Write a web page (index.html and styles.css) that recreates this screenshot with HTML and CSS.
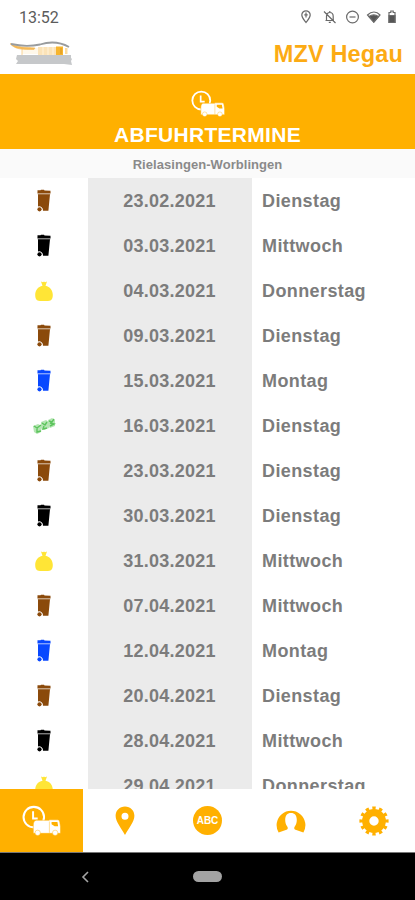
FILE: index.html
```html
<!DOCTYPE html>
<html lang="de">
    <head>
        <meta charset="utf-8">
        <meta name="viewport" content="width=device-width, initial-scale=1">
        <title>MZV Hegau</title>
        <link rel="stylesheet" href="styles.css">
    </head>
    <body>
        <svg class="sprite">
            <symbol id="bin" viewBox="0 0 16 24">
                <path fill="currentColor" d="M1.500 1.300h3l.5-.5h3l.5.7 6 .3v2.500h-13z"/>
                <path fill="currentColor" opacity=".35" d="M1.500 3.500h13v2h-13z"/>
                <path fill="currentColor" d="M2 5.300h12L12.400 21.700H7a4 4 0 0 0-5-4.300z"/>
                <circle fill="currentColor" cx="3.500" cy="20.300" r="2.100"/>
            </symbol>
            <symbol id="bag" viewBox="0 0 18 21">
                <path fill="currentColor" d="M6 .5l2 .8 1-.8 1 .8 2-.8-1.500 4.200c4.500 1 7.300 4.300 7.300 9.300 0 3-.8 4.700-2.400 5.400-1.500.7-11.300.7-12.800 0C1 18.700.2 17 .2 14c0-5 2.800-8.300 7.300-9.300z"/>
            </symbol>
            <symbol id="green" viewBox="0 0 24 18">
                <g fill="#b5e5b3">
                    <path d="M1 9l5-2 4 2-1 6-4 2-3-2zM9 5l5-2 3 2v6l-5 2-3-2zM16 3l4-2 3 2v6l-5 2-2-2z"/>
                </g>
                <g fill="none" stroke="#5cc45c" stroke-width="1.400">
                    <path d="M2 9l3 2 4-3M5 11v4l4-1M10 6l3 2 2-3M12 9l-1 3 4-1M17 4l3 1 2-3M18 6l4 1-4 2"/>
                </g>
            </symbol>
            <symbol id="truck" viewBox="0 0 38 30">
                <circle cx="11.500" cy="11.700" r="10" fill="none" stroke="currentColor" stroke-width="2"/>
                <path d="M10.800 6v7h4.500" fill="none" stroke="currentColor" stroke-width="1.900"/>
                <path d="M14 14.800h12.500v-.5h8.300c1.300 0 1.800 1 2 2.200l.7 4.500V27.500H11v-8c0-2.500 1-4.700 3-4.700z" fill="currentColor" stroke="#ffb000" stroke-width=".5"/>
                <path d="M28.800 16.500h5.700l.7 4h-3.400l-3-1.800z" fill="#ffb000"/>
                <path d="M26.700 16v11" stroke="#ffb000" stroke-width=".4"/>
                <circle cx="15.300" cy="27" r="2.600" fill="currentColor" stroke="#ffb000" stroke-width=".4"/>
                <circle cx="32.300" cy="27" r="2.600" fill="currentColor" stroke="#ffb000" stroke-width=".4"/>
            </symbol>
        </svg>

        <div class="status">
            <span class="clock">13:52</span>
            <svg class="status-icons" viewBox="0 0 100 16" fill="none" stroke="#6a6a6a" stroke-width="1.200">
                <path d="M6 13.500C4 10.800 1.800 8.800 1.800 6a4.200 4.200 0 0 1 8.400 0C10.200 8.800 8 10.800 6 13.500z"/>
                <path d="M6 3.500v5M4.300 5.800h3.400"/>
                <path d="M25.500 11.500h8.500M26.500 11V7.500c0-2.500 1.300-4 3.300-4s3.400 1.500 3.400 4V11M29.800 2v1.500M28.800 13.300h2M24 2.500l11.500 11.500"/>
                <circle cx="52.500" cy="8" r="5.900"/>
                <path d="M49.500 8h6"/>
                <path d="M67.500 6c4-4 9-4 12.500 0L73.800 13z"/>
                <path d="M69 7.500c3-2 6.500-2 9.500 0L73.800 13z" fill="#555"/>
                <path d="M89 3.500h1.800V2h2.400v1.500H95v10h-6z"/>
                <path d="M89 6.500h6v7h-6z" fill="#555"/>
            </svg>
        </div>

        <header class="header">
            <svg class="logo" viewBox="0 0 64 26">
                <path d="M7 14h54v3l1 1-1 2 1 4-8-1H6l2-3-2-2z" fill="#c6c8ca"/>
                <path d="M12 7h18v6H12z" fill="#fff8ea"/>
                <path d="M28 6h20v8H28z" fill="#fbe3b8"/>
                <path d="M33 6v8M38 6v8M43 6v8" stroke="#fff3dc"/>
                <path d="M46 5.500h7V14h-7z" fill="#f7b52d"/>
                <path d="M55 7h2.500v6H55z" fill="#fbdca0"/>
                <path d="M51 7v6" stroke="#d89420"/>
                <path d="M0 2.500c7 4 16 3.500 25 4.500l-1 1.500C14 8.500 5 9 0 2.500zM12 8v6" fill="#f5b856" stroke="#f5b856" stroke-width=".6"/>
                <path d="M1 3c9 2 19 2.500 29 .500 11-3.500 21-2 29 2.500" fill="none" stroke="#999c9e" stroke-width="1.800"/>
            </svg>
            <h1>MZV Hegau</h1>
        </header>

        <div class="banner">
            <svg class="banner-icon"><use href="#truck"/></svg>
            <h2>ABFUHRTERMINE</h2>
        </div>
        <div class="place">Rielasingen-Worblingen</div>

        <main class="list">
            <div class="row">
                <div class="type"><svg class="bin brown"><use href="#bin"/></svg></div>
                <div class="date">23.02.2021</div>
                <div class="day">Dienstag</div>
            </div>
            <div class="row">
                <div class="type"><svg class="bin black"><use href="#bin"/></svg></div>
                <div class="date">03.03.2021</div>
                <div class="day">Mittwoch</div>
            </div>
            <div class="row">
                <div class="type"><svg class="bag"><use href="#bag"/></svg></div>
                <div class="date">04.03.2021</div>
                <div class="day">Donnerstag</div>
            </div>
            <div class="row">
                <div class="type"><svg class="bin brown"><use href="#bin"/></svg></div>
                <div class="date">09.03.2021</div>
                <div class="day">Dienstag</div>
            </div>
            <div class="row">
                <div class="type"><svg class="bin blue"><use href="#bin"/></svg></div>
                <div class="date">15.03.2021</div>
                <div class="day">Montag</div>
            </div>
            <div class="row">
                <div class="type"><svg class="green"><use href="#green"/></svg></div>
                <div class="date">16.03.2021</div>
                <div class="day">Dienstag</div>
            </div>
            <div class="row">
                <div class="type"><svg class="bin brown"><use href="#bin"/></svg></div>
                <div class="date">23.03.2021</div>
                <div class="day">Dienstag</div>
            </div>
            <div class="row">
                <div class="type"><svg class="bin black"><use href="#bin"/></svg></div>
                <div class="date">30.03.2021</div>
                <div class="day">Dienstag</div>
            </div>
            <div class="row">
                <div class="type"><svg class="bag"><use href="#bag"/></svg></div>
                <div class="date">31.03.2021</div>
                <div class="day">Mittwoch</div>
            </div>
            <div class="row">
                <div class="type"><svg class="bin brown"><use href="#bin"/></svg></div>
                <div class="date">07.04.2021</div>
                <div class="day">Mittwoch</div>
            </div>
            <div class="row">
                <div class="type"><svg class="bin blue"><use href="#bin"/></svg></div>
                <div class="date">12.04.2021</div>
                <div class="day">Montag</div>
            </div>
            <div class="row">
                <div class="type"><svg class="bin brown"><use href="#bin"/></svg></div>
                <div class="date">20.04.2021</div>
                <div class="day">Dienstag</div>
            </div>
            <div class="row">
                <div class="type"><svg class="bin black"><use href="#bin"/></svg></div>
                <div class="date">28.04.2021</div>
                <div class="day">Mittwoch</div>
            </div>
            <div class="row">
                <div class="type"><svg class="bag"><use href="#bag"/></svg></div>
                <div class="date">29.04.2021</div>
                <div class="day">Donnerstag</div>
            </div>
        </main>

        <nav class="tabs">
            <a class="tab active"><svg class="tab-truck"><use href="#truck"/></svg></a>
            <a class="tab">
                <svg class="tab-icon" viewBox="0 0 30 30">
                    <path fill="#ffb000" fill-rule="evenodd" d="M15 .5c5.300 0 9.400 4 9.400 9.300 0 6-5.400 11.700-9.400 19.200C11 21.500 5.600 15.800 5.600 9.800 5.600 4.500 9.700.5 15 .5zm0 6.300a3.500 3.500 0 1 0 0 7 3.500 3.500 0 0 0 0-7z"/>
                </svg>
            </a>
            <a class="tab"><span class="abc">ABC</span></a>
            <a class="tab">
                <svg class="tab-icon" viewBox="0 0 30 30">
                    <path fill="#ffb000" d="M2.600 26.500A14.400 14.400 0 1 1 27.400 26.500L19.500 23.800c-1.600-.6-1.600-2.300-.6-3.600 1.200-1.600 1.900-3.600 1.900-6.200 0-4.400-2-7-5.800-7s-5.800 2.600-5.800 7c0 2.600.7 4.600 1.900 6.200 1 1.300 1 3-.6 3.600z"/>
                </svg>
            </a>
            <a class="tab">
                <svg class="tab-icon" viewBox="0 0 30 30">
                    <circle cx="15" cy="15" r="8.300" fill="none" stroke="#ffb000" stroke-width="7.200"/>
                    <circle cx="15" cy="15" r="12.700" fill="none" stroke="#ffb000" stroke-width="3.800" pathLength="120" stroke-dasharray="5 5" stroke-dashoffset="2.500"/>
                </svg>
            </a>
        </nav>

        <div class="navbar">
            <svg class="back" viewBox="0 0 8 12"><path d="M7 1L2 6l5 5" fill="none" stroke="#a5a5a5" stroke-width="1.600"/></svg>
            <span class="home"></span>
            <span class="spacer"></span>
        </div>
    </body>
</html>
```
FILE: styles.css
```css
* {
    box-sizing: border-box;
}

body {
    margin: 0;
    height: 900px;
    display: flex;
    flex-direction: column;
    overflow: hidden;
    background-color: #ffffff;
    font-family: "Liberation Sans", Arial, sans-serif;
}

svg {
    display: block;
}

.sprite {
    position: absolute;
    width: 0;
    height: 0;
}

h1,
h2 {
    margin: 0;
    font-weight: 700;
}

.status {
    height: 34px;
    flex: none;
    display: flex;
    align-items: center;
    justify-content: space-between;
    padding: 0 15px 0 19px;
}

.clock {
    font-family: Roboto, sans-serif;
    font-size: 16px;
    color: #5c5c5c;
}

.status-icons {
    width: 100px;
    height: 16px;
}

.header {
    height: 40px;
    flex: none;
    display: flex;
    align-items: center;
    justify-content: space-between;
    padding: 0 12px 0 10px;
}

.logo {
    width: 64px;
    height: 26px;
}

.header h1 {
    font-size: 23.500px;
    letter-spacing: 0.15px;
    color: #fcab14;
}

.banner {
    height: 75px;
    flex: none;
    display: flex;
    flex-direction: column;
    align-items: center;
    padding-top: 16px;
    background-color: #ffb000;
    color: #ffffff;
}

.banner-icon {
    width: 34px;
    height: 27px;
}

.banner h2 {
    margin-top: 6px;
    font-size: 21px;
    line-height: 24px;
    letter-spacing: 0.3px;
}

.place {
    height: 29px;
    flex: none;
    background-color: #fafafa;
    color: #8a8a8a;
    font-size: 13px;
    font-weight: 700;
    line-height: 31px;
    letter-spacing: 0.05px;
    text-align: center;
}

.list {
    flex: 1;
    min-height: 0;
    overflow: hidden;
}

.row {
    height: 45px;
    display: grid;
    grid-template-columns: 88px 164px 1fr;
    color: #7c7c7c;
    font-size: 18px;
    font-weight: 700;
    line-height: 47px;
    letter-spacing: 0.4px;
}

.type {
    display: flex;
    align-items: center;
    justify-content: center;
    padding-bottom: 1px;
}

.date {
    padding-right: 1px;
    background-color: #ebebeb;
    letter-spacing: 0.25px;
    text-align: center;
}

.day {
    padding-left: 10px;
}

.bin {
    width: 16px;
    height: 24px;
}

.brown {
    color: #8b4a0b;
}

.black {
    color: #000000;
}

.blue {
    color: #0848ff;
}

.bag {
    width: 18px;
    height: 21px;
    color: #ffe536;
}

.green {
    width: 24px;
    height: 18px;
}

.tabs {
    height: 63px;
    flex: none;
    display: grid;
    grid-template-columns: repeat(5, 1fr);
}

.tab {
    display: flex;
    align-items: center;
    justify-content: center;
}

.active {
    background-color: #ffb000;
    color: #ffffff;
}

.tab-truck {
    width: 39px;
    height: 31px;
}

.tab-icon {
    width: 30px;
    height: 30px;
}

.abc {
    width: 29px;
    height: 29px;
    border-radius: 50%;
    background-color: #ffb000;
    color: #ffffff;
    font-size: 10px;
    font-weight: 700;
    line-height: 30px;
    text-align: center;
}

.navbar {
    height: 48px;
    flex: none;
    display: flex;
    align-items: center;
    justify-content: space-between;
    padding: 0 81px;
    border-top: 1px solid #777777;
    background-color: #000000;
}

.back {
    width: 8px;
    height: 12px;
}

.home {
    width: 29px;
    height: 11px;
    border-radius: 6px;
    background-color: #a3a3a3;
}

.spacer {
    width: 8px;
}
```
